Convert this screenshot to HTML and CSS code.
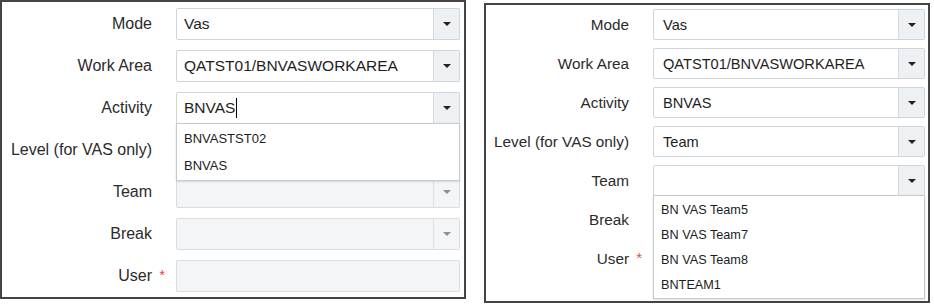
FILE: index.html
```html
<!DOCTYPE html>
<html>
<head>
  <title>Task Assignment Form</title>
  <link rel="stylesheet" href="styles.css">
</head>
<body>

<div class="screens">

  <!-- Activity lookup open -->
  <div class="panel panel-left">
    <div class="row">
      <label>Mode</label>
      <div class="field"><span class="value">Vas</span><span class="btn"><i class="arrow"></i></span></div>
    </div>
    <div class="row">
      <label>Work Area</label>
      <div class="field"><span class="value">QATST01/BNVASWORKAREA</span><span class="btn"><i class="arrow"></i></span></div>
    </div>
    <div class="row">
      <label>Activity</label>
      <div class="field">
        <span class="value">BNVAS<span class="caret"></span></span><span class="btn"><i class="arrow"></i></span>
        <ul class="list">
          <li>BNVASTST02</li>
          <li>BNVAS</li>
        </ul>
      </div>
    </div>
    <div class="row">
      <label>Level (for VAS only)</label>
      <div class="field"><span class="value"></span><span class="btn"><i class="arrow"></i></span></div>
    </div>
    <div class="row">
      <label>Team</label>
      <div class="field disabled"><span class="value"></span><span class="btn"><i class="arrow"></i></span></div>
    </div>
    <div class="row">
      <label>Break</label>
      <div class="field disabled"><span class="value"></span><span class="btn"><i class="arrow"></i></span></div>
    </div>
    <div class="row">
      <label class="required">User<span class="req">*</span></label>
      <div class="field disabled"><span class="value"></span></div>
    </div>
  </div>

  <!-- Team lookup open -->
  <div class="panel panel-right">
    <div class="row">
      <label>Mode</label>
      <div class="field"><span class="value">Vas</span><span class="btn"><i class="arrow"></i></span></div>
    </div>
    <div class="row">
      <label>Work Area</label>
      <div class="field"><span class="value">QATST01/BNVASWORKAREA</span><span class="btn"><i class="arrow"></i></span></div>
    </div>
    <div class="row">
      <label>Activity</label>
      <div class="field"><span class="value">BNVAS</span><span class="btn"><i class="arrow"></i></span></div>
    </div>
    <div class="row">
      <label>Level (for VAS only)</label>
      <div class="field"><span class="value">Team</span><span class="btn"><i class="arrow"></i></span></div>
    </div>
    <div class="row">
      <label>Team</label>
      <div class="field">
        <span class="value"></span><span class="btn"><i class="arrow"></i></span>
        <ul class="list">
          <li>BN VAS Team5</li>
          <li>BN VAS Team7</li>
          <li>BN VAS Team8</li>
          <li>BNTEAM1</li>
        </ul>
      </div>
    </div>
    <div class="row">
      <label>Break</label>
      <div class="field"><span class="value"></span><span class="btn"><i class="arrow"></i></span></div>
    </div>
    <div class="row">
      <label class="required">User<span class="req">*</span></label>
      <div class="field"><span class="value"></span></div>
    </div>
  </div>

</div>

</body>
</html>
```

FILE: styles.css
```css
body { margin: 0; padding: 0; background: #fff; font-family: "Liberation Sans", Arial, sans-serif; color: #2b2b2b; }
.screens { display: flex; align-items: flex-start; }

.panel {
  box-sizing: border-box; border: 2px solid #444; background: #fff;
  display: flex; flex-direction: column;
}
.row { display: grid; align-items: center; column-gap: 24px; }
.row label { text-align: right; white-space: nowrap; position: relative; }
.req { position: absolute; right: -13px; top: -1px; color: #e5484d; font-size: 15px; }

.field {
  position: relative; display: flex; box-sizing: border-box;
  border: 1px solid #d0d5da; border-radius: 2px; background: #fff;
}
.field.disabled { background: #f3f5f7; border-color: #d9dde1; }
.value { flex: 1; display: flex; align-items: center; padding-left: 7px; color: #1e1e1e; white-space: nowrap; }
.caret { display: inline-block; width: 1px; height: 20px; background: #000; margin-left: 1px; }
.btn {
  width: 25px; display: flex; align-items: center; justify-content: center;
  background: #eef1f3; border-left: 1px solid #d6dade;
}
.arrow { width: 0; height: 0; border-left: 4px solid transparent; border-right: 4px solid transparent; border-top: 4px solid #222; }
.disabled .btn { background: #f3f5f7; border-left-color: #dcdfe3; }
.disabled .arrow { border-top-color: #8a8f94; }

.list {
  position: absolute; left: -1px; right: -1px; top: 100%; margin: 0; padding: 1px 0;
  list-style: none; background: #fff; border: 1px solid #c6cacf;
  box-shadow: 0 1px 2px rgba(0,0,0,.12); z-index: 2;
}
.list li { display: flex; align-items: center; padding-left: 7px; color: #1c1c1c; }

/* left screen */
.panel-left { width: 466px; height: 299px; padding: 6px 4px 0 0; gap: 10px; }
.panel-left .row { grid-template-columns: 150px 1fr; }
.panel-left label { font-size: 16px; }
.panel-left .field { height: 32px; }
.panel-left .value { font-size: 15.5px; }
.panel-left .list li { height: 27px; font-size: 13px; }

/* right screen */
.panel-right { width: 446px; height: 300px; margin: 3px 0 0 18px; padding: 4px 3px 0 0; gap: 8px; }
.panel-right .row { grid-template-columns: 143px 1fr; }
.panel-right label { font-size: 15.3px; }
.panel-right .field { height: 31px; }
.panel-right .value { font-size: 14.6px; padding-left: 9px; }
.panel-right .list li { height: 25px; font-size: 12.7px; }
```
